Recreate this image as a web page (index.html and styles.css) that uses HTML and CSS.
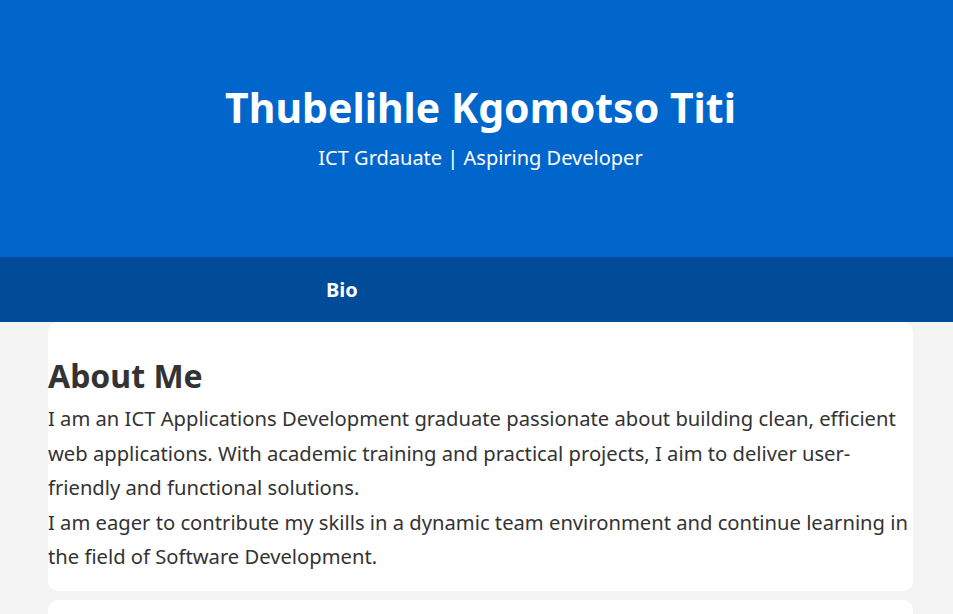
FILE: index.html
```html
<!DOCTYPE html>
<html lang="en">
<head>
<meta charset="utf-8">
<title>Thubelihle Kgomotso Titi</title>
<link rel="stylesheet" href="styles.css">
</head>
<body>
<header class="hero">
  <h1 class="hero-title">Thubelihle Kgomotso Titi</h1>
  <p class="hero-sub">ICT Grdauate | Aspiring Developer</p>
</header>
<nav class="nav">
  <a class="nav-link" href="#bio">Bio</a>
</nav>
<main class="main">
  <section class="card" id="bio">
    <h2 class="card-title">About Me</h2>
    <p class="card-text">I am an ICT Applications Development graduate passionate about building clean, efficient web applications. With academic training and practical projects, I aim to deliver user-friendly and functional solutions.<br>I am eager to contribute my skills in a dynamic team environment and continue learning in the field of Software Development.</p>
  </section>
  <section class="card card-empty"></section>
</main>
</body>
</html>
```
FILE: styles.css
```css
html, body {
  margin: 0;
  padding: 0;
}
body {
  font-family: "Noto Sans", "Open Sans", sans-serif;
  background: #f4f4f4;
  color: #333;
}
.hero {
  background: #0066cc;
  color: #fff;
  text-align: center;
  height: 257px;
  box-sizing: border-box;
  padding-top: 80px;
  padding-left: 8px;
}
.hero-title {
  margin: 0;
  font-size: 41px;
  font-weight: 700;
  line-height: 54px;
}
.hero-sub {
  margin: 9px 0 0;
  font-size: 20px;
  line-height: 30px;
}
.nav {
  background: #004c99;
  height: 65px;
  display: flex;
  align-items: center;
  padding-left: 326px;
}
.nav-link {
  color: #fff;
  text-decoration: none;
  font-weight: 700;
  font-size: 20px;
}
.main {
  display: flex;
  flex-direction: column;
  gap: 9px;
  padding: 0 40px 0 48px;
}
.card {
  background: #fff;
  border-radius: 10px;
  padding: 32px 0 17px;
}
.card-empty {
  min-height: 60px;
}
.card-title {
  margin: 0 0 3px;
  font-size: 32px;
  font-weight: 700;
  line-height: 44px;
}
.card-text {
  margin: 0;
  font-size: 20.2px;
  line-height: 34.5px;
}
```
